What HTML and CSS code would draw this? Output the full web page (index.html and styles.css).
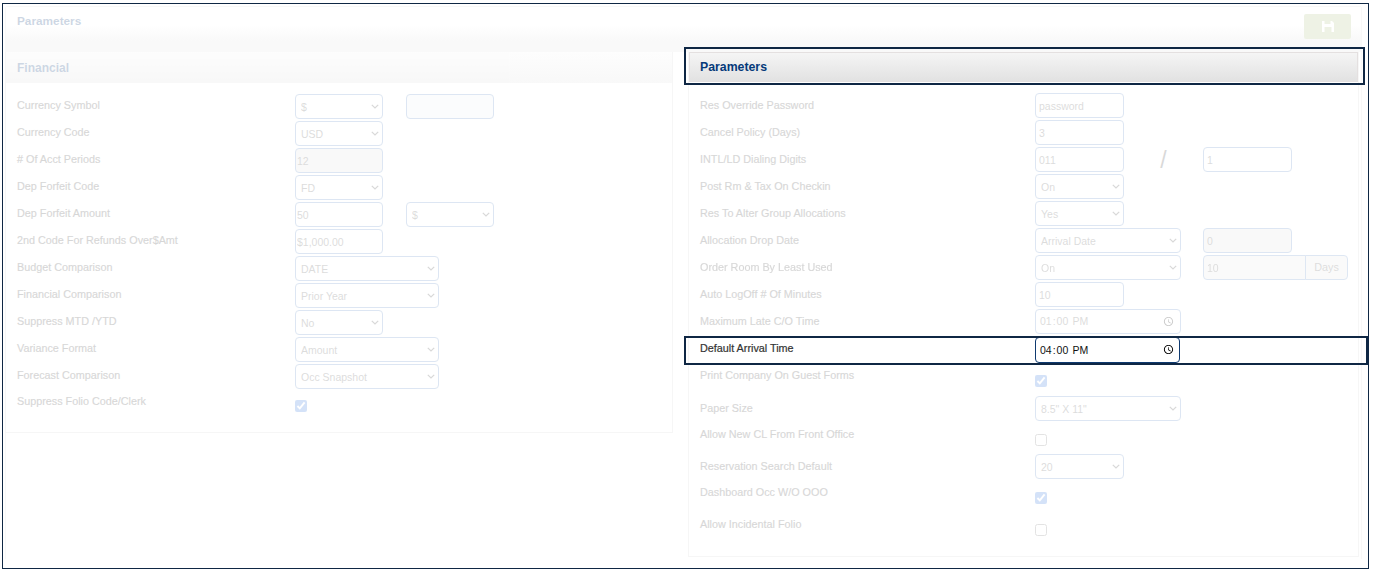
FILE: index.html
```html
<!DOCTYPE html>
<html lang="en">
<head>
<meta charset="utf-8">
<title>Parameters</title>
<link rel="stylesheet" href="styles.css">
</head>
<body>
<div class="frame">
  <div class="card">
    <div class="topbar">
      <h1 class="title dim">Parameters</h1>
      <button class="save" type="button" aria-label="Save">
        <svg width="12" height="11" viewBox="0 0 12 11"><path fill="#fff" fill-rule="evenodd" d="M0 0h2.5v3h6V0h1.500l2 2v9H9.500V6h-7v5H0z"/></svg>
      </button>
    </div>
    <div class="columns">
      <section class="panel panel-left">
        <div class="dim">
          <h2 class="panel-head">Financial</h2>
          <div class="rows">
            <div class="row"><label>Currency Symbol</label><select class="n"><option>$</option></select><input class="n second tint" type="text"></div>
            <div class="row"><label>Currency Code</label><select class="n"><option>USD</option></select></div>
            <div class="row"><label># Of Acct Periods</label><input class="n ro" type="text" value="12"></div>
            <div class="row"><label>Dep Forfeit Code</label><select class="n"><option>FD</option></select></div>
            <div class="row"><label>Dep Forfeit Amount</label><input class="n" type="text" value="50"><select class="n second"><option>$</option></select></div>
            <div class="row"><label>2nd Code For Refunds Over$Amt</label><input class="n" type="text" value="$1,000.00"></div>
            <div class="row"><label>Budget Comparison</label><select class="w"><option>DATE</option></select></div>
            <div class="row"><label>Financial Comparison</label><select class="w"><option>Prior Year</option></select></div>
            <div class="row"><label>Suppress MTD /YTD</label><select class="n"><option>No</option></select></div>
            <div class="row"><label>Variance Format</label><select class="w"><option>Amount</option></select></div>
            <div class="row"><label>Forecast Comparison</label><select class="w"><option>Occ Snapshot</option></select></div>
            <div class="row row-check"><label>Suppress Folio Code/Clerk</label><input type="checkbox" checked></div>
          </div>
        </div>
      </section>
      <section class="panel panel-right">
        <h2 class="panel-head strong marked">Parameters</h2>
        <div class="rows">
          <div class="row dim"><label>Res Override Password</label><input class="n" type="text" placeholder="password"></div>
          <div class="row dim"><label>Cancel Policy (Days)</label><input class="n" type="text" value="3"></div>
          <div class="row dim"><label>INTL/LD Dialing Digits</label><input class="n" type="text" value="011"><span class="slash">/</span><input class="n" type="text" value="1"></div>
          <div class="row dim"><label>Post Rm &amp; Tax On Checkin</label><select class="n"><option>On</option></select></div>
          <div class="row dim"><label>Res To Alter Group Allocations</label><select class="n"><option>Yes</option></select></div>
          <div class="row dim"><label>Allocation Drop Date</label><select class="w"><option>Arrival Date</option></select><input class="n second ro" type="text" value="0"></div>
          <div class="row dim"><label>Order Room By Least Used</label><select class="w"><option>On</option></select><span class="group second"><input class="ro" type="text" value="10"><span class="addon">Days</span></span></div>
          <div class="row dim"><label>Auto LogOff # Of Minutes</label><input class="n" type="text" value="10"></div>
          <div class="row dim"><label>Maximum Late C/O Time</label><input class="w" type="time" value="13:00"></div>
          <div class="row active marked"><label>Default Arrival Time</label><input class="w" type="time" value="16:00"></div>
          <div class="row row-check tall dim"><label>Print Company On Guest Forms</label><input type="checkbox" checked></div>
          <div class="row dim"><label>Paper Size</label><select class="w"><option>8.5" X 11"</option></select></div>
          <div class="row row-check dim"><label>Allow New CL From Front Office</label><input type="checkbox"></div>
          <div class="row dim"><label>Reservation Search Default</label><select class="n"><option>20</option></select></div>
          <div class="row row-check tall dim"><label>Dashboard Occ W/O OOO</label><input type="checkbox" checked></div>
          <div class="row row-check dim"><label>Allow Incidental Folio</label><input type="checkbox"></div>
        </div>
      </section>
    </div>
  </div>
</div>
</body>
</html>
```

FILE: styles.css
```css
* { box-sizing: border-box; }

html, body { margin: 0; background: #fff; }

body {
  font-family: "Liberation Sans", Arial, sans-serif;
  font-size: 10.8px;
  color: #333;
}

.frame {
  width: 1367px;
  height: 566px;
  margin: 3px 0 0 2px;
  padding: 2px 2px 0;
  border: 1px solid #0f2744;
}

.card {
  width: 1357px;
  height: 553px;
  border: 1px solid #f8f8f8;
  border-bottom: 0;
  border-radius: 3px 3px 0 0;
}

.dim { opacity: .2; }

.topbar {
  display: flex;
  justify-content: space-between;
  height: 45px;
  padding: 7px 10px 0 11px;
  background: linear-gradient(#fff, #fff 40%, #f9f9f9 75%);
}

.title {
  margin: 0;
  font-size: 11.8px;
  line-height: 14px;
  font-weight: 700;
  color: #063a7a;
}

.save {
  width: 47px;
  height: 25px;
  padding: 0;
  border: 0;
  border-radius: 2px;
  background: #eef2e5;
  display: flex;
  align-items: center;
  justify-content: center;
}

.columns {
  display: flex;
  align-items: flex-start;
  gap: 15px;
  margin-left: -1px;
}

.panel { border: 1px solid #f6f6f6; border-top: 0; }

.panel-left { width: 668px; height: 381px; }

.panel-right { width: 671px; height: 505px; }

.panel-head {
  margin: 0;
  height: 31px;
  padding: 0 11px;
  font-size: 12px;
  line-height: 32px;
  font-weight: 700;
  color: #063a7a;
  background: linear-gradient(#f6f6f6, #dedede);
}

.panel-right .panel-head {
  height: 30px;
  padding: 0 10px;
  font-size: 12.300px;
  background: linear-gradient(#f5f5f5, #e2e2e2);
}

.strong { border: 1px solid #e4e0e0; line-height: 28px; }

.marked { position: relative; }

.marked::after {
  content: "";
  position: absolute;
  border: 2px solid #0f2744;
  pointer-events: none;
}

.panel-head.marked::after { inset: -6px -8px -4px -6px; }

.row.marked::after { inset: -1px -10px -1px -16px; }

.rows { padding: 11px 0 0 11px; }

.panel-left label { width: 278px; }

.panel-right label { width: 335px; padding-top: 5px; }

.row {
  display: flex;
  align-items: flex-start;
  height: 27px;
}

label {
  flex: none;
  padding-top: 4px;
  line-height: 14px;
  color: #3a3a3a;
  -webkit-text-stroke: .2px currentColor;
}

.active {
  height: 27px;
  margin-top: 1px;
  background: #fff;
}

.active label { color: #333; padding-top: 4px; }

input[type="text"], input[type="time"], select {
  flex: none;
  height: 25px;
  padding: 0 5px;
  border: 1px solid #5a87c4;
  border-radius: 4px;
  background-color: #fff;
  font-family: "Liberation Sans", Arial, sans-serif;
  font-size: 10.5px;
  color: #555;
  outline: 0;
}

select {
  appearance: none;
  padding: 0 14px 0 5px;
  background-image: url("data:image/svg+xml,%3Csvg xmlns='http://www.w3.org/2000/svg' width='8' height='5'%3E%3Cpath d='M.8.8 4 4l3.200-3.200' fill='none' stroke='%23444' stroke-width='1.200'/%3E%3C/svg%3E");
  background-repeat: no-repeat;
  background-position: right 3px center;
}

input[type="text"] { padding: 0 1px 0 3px; }

.panel-left input[type="text"] { padding-left: 1px; }

.panel-left select { padding-left: 5px; }

input[type="time"] { padding: 0 3px; }

input::placeholder { color: #555; }

.n { width: 88px; }

.w { width: 144px; }

.panel-right .n { width: 89px; }

.panel-right .w { width: 146px; }

.second { margin-left: 23px; }

.panel-right .second { margin-left: 22px; }

.ro { background-color: #e4e4e4 !important; }

input.tint { background-color: #eef1f6; }

.slash {
  flex: none;
  width: 79px;
  text-align: center;
  font-size: 23px;
  line-height: 26px;
  color: #444;
}

.group { display: flex; width: 145px; }

.group input { flex: 1; width: 0; border-radius: 4px 0 0 4px; }

.addon {
  flex: none;
  width: 43px;
  height: 25px;
  line-height: 23px;
  text-align: center;
  color: #555;
  border: 1px solid #5a87c4;
  border-radius: 0 4px 4px 0;
  background: #e4e4e4;
  margin-left: -1px;
}

.panel-right .active input[type="time"] {
  width: 145px;
  height: 26px;
  padding-right: 2px;
  border-color: #0f3a70;
  color: #111;
}

input[type="checkbox"] {
  flex: none;
  width: 12px;
  height: 12px;
  margin: 9px 0 0;
  accent-color: #2f74e0;
}

.panel-left .row-check label { padding-top: 3px; }

.panel-right .row-check label { padding-top: 4px; }

.row-check { height: 31px; }

.row-check.tall { height: 32px; }

.panel-right input[type="checkbox"] { margin-top: 11px; }
```
